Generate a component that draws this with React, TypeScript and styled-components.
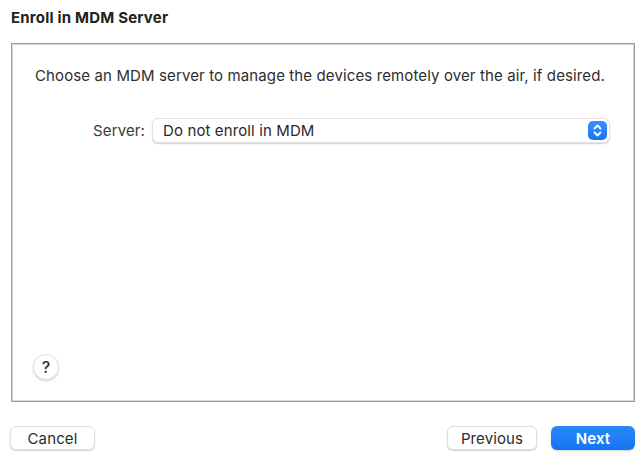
import React from "react";
import styled, { createGlobalStyle } from "styled-components";

const Global = createGlobalStyle`
  html, body { margin: 0; padding: 0; background: #ffffff; }
  body { font-family: Inter, "Liberation Sans", Arial, sans-serif; color: #262626; -webkit-font-smoothing: antialiased; }
  * { box-sizing: border-box; }
`;

const Window = styled.div`
  width: 644px;
  height: 465px;
  display: flex;
  flex-direction: column;
  padding: 0 9px 0 11px;
`;

const Title = styled.h1`
  margin: 0;
  height: 43px;
  display: flex;
  align-items: center;
  padding-bottom: 8px;
  font-size: 15px;
  font-weight: 700;
  color: #222;
  letter-spacing: 0.2px;
`;

const Panel = styled.div`
  height: 359px;
  border: 1px solid #9d9d9d;
  box-shadow: inset 0 0 0 1px #d6d6d6;
  display: flex;
  flex-direction: column;
  padding: 23px 24px 21px 23px;
`;

const Description = styled.p`
  margin: 0;
  font-size: 15px;
  line-height: 18px;
  letter-spacing: 0.12px;
  color: #2e2e2e;
  white-space: nowrap;
`;

const FieldRow = styled.div`
  margin-top: 33px;
  display: grid;
  grid-template-columns: 110px 1fr;
  column-gap: 7px;
  align-items: center;
`;

const Label = styled.label`
  text-align: right;
  font-size: 15px;
  letter-spacing: 0.12px;
  color: #3a3a3a;
`;

const Popup = styled.div`
  position: relative;
  height: 25px;
  border-radius: 6px;
  background: #fff;
  border: 1px solid #e2e2e2;
  box-shadow: 0 1px 1.5px rgba(0, 0, 0, 0.18);
  display: flex;
  align-items: center;
  padding: 0 0 0 10px;
  font-size: 15px;
  letter-spacing: 0.12px;
  color: #2a2a2a;
`;

const PopupValue = styled.span`
  flex: 1;
`;

const Stepper = styled.span`
  width: 19px;
  height: 19px;
  margin-right: 2px;
  border-radius: 5px;
  background: linear-gradient(#3b8ffb, #1676f3);
  display: flex;
  align-items: center;
  justify-content: center;
`;

const HelpButton = styled.button`
  margin-top: auto;
  margin-left: -2px;
  width: 26px;
  height: 26px;
  border-radius: 50%;
  border: 1px solid #e4e4e4;
  background: #fff;
  box-shadow: 0 1px 2px rgba(0, 0, 0, 0.18);
  font-family: inherit;
  font-size: 16px;
  font-weight: 500;
  color: #333;
  padding: 0;
  display: flex;
  align-items: center;
  justify-content: center;
`;

const Footer = styled.div`
  display: flex;
  align-items: center;
  margin-top: 24px;
  margin-left: -1px;
  gap: 14px;
`;

const Spacer = styled.div`
  flex: 1;
`;

const Button = styled.button<{ $primary?: boolean; $w: number }>`
  width: ${(p) => p.$w}px;
  height: 24px;
  border-radius: 6px;
  font-family: inherit;
  font-size: 15px;
  letter-spacing: 0.12px;
  padding: 0;
  font-weight: ${(p) => (p.$primary ? 600 : 400)};
  color: ${(p) => (p.$primary ? "#fff" : "#2b2b2b")};
  border: ${(p) => (p.$primary ? "none" : "1px solid #e0e0e0")};
  background: ${(p) => (p.$primary ? "linear-gradient(#2b88fa, #1574f2)" : "#fff")};
  box-shadow: 0 1px 1.5px rgba(0, 0, 0, 0.18);
`;

export default function App() {
  return (
    <>
      <Global />
      <Window>
        <Title>Enroll in MDM Server</Title>
        <Panel>
          <Description>
            Choose an MDM server to manage the devices remotely over the air, if desired.
          </Description>
          <FieldRow>
            <Label>Server:</Label>
            <Popup>
              <PopupValue>Do not enroll in MDM</PopupValue>
              <Stepper>
                <svg width="11" height="15" viewBox="0 0 11 15" fill="none">
                  <path d="M2.5 5.5 L5.5 2.5 L8.5 5.5" stroke="#fff" strokeWidth="1.8" strokeLinecap="round" strokeLinejoin="round" />
                  <path d="M2.5 9.5 L5.5 12.5 L8.5 9.5" stroke="#fff" strokeWidth="1.8" strokeLinecap="round" strokeLinejoin="round" />
                </svg>
              </Stepper>
            </Popup>
          </FieldRow>
          <HelpButton aria-label="Help">?</HelpButton>
        </Panel>
        <Footer>
          <Button $w={85}>Cancel</Button>
          <Spacer />
          <Button $w={90}>Previous</Button>
          <Button $w={84} $primary>
            Next
          </Button>
        </Footer>
      </Window>
    </>
  );
}
